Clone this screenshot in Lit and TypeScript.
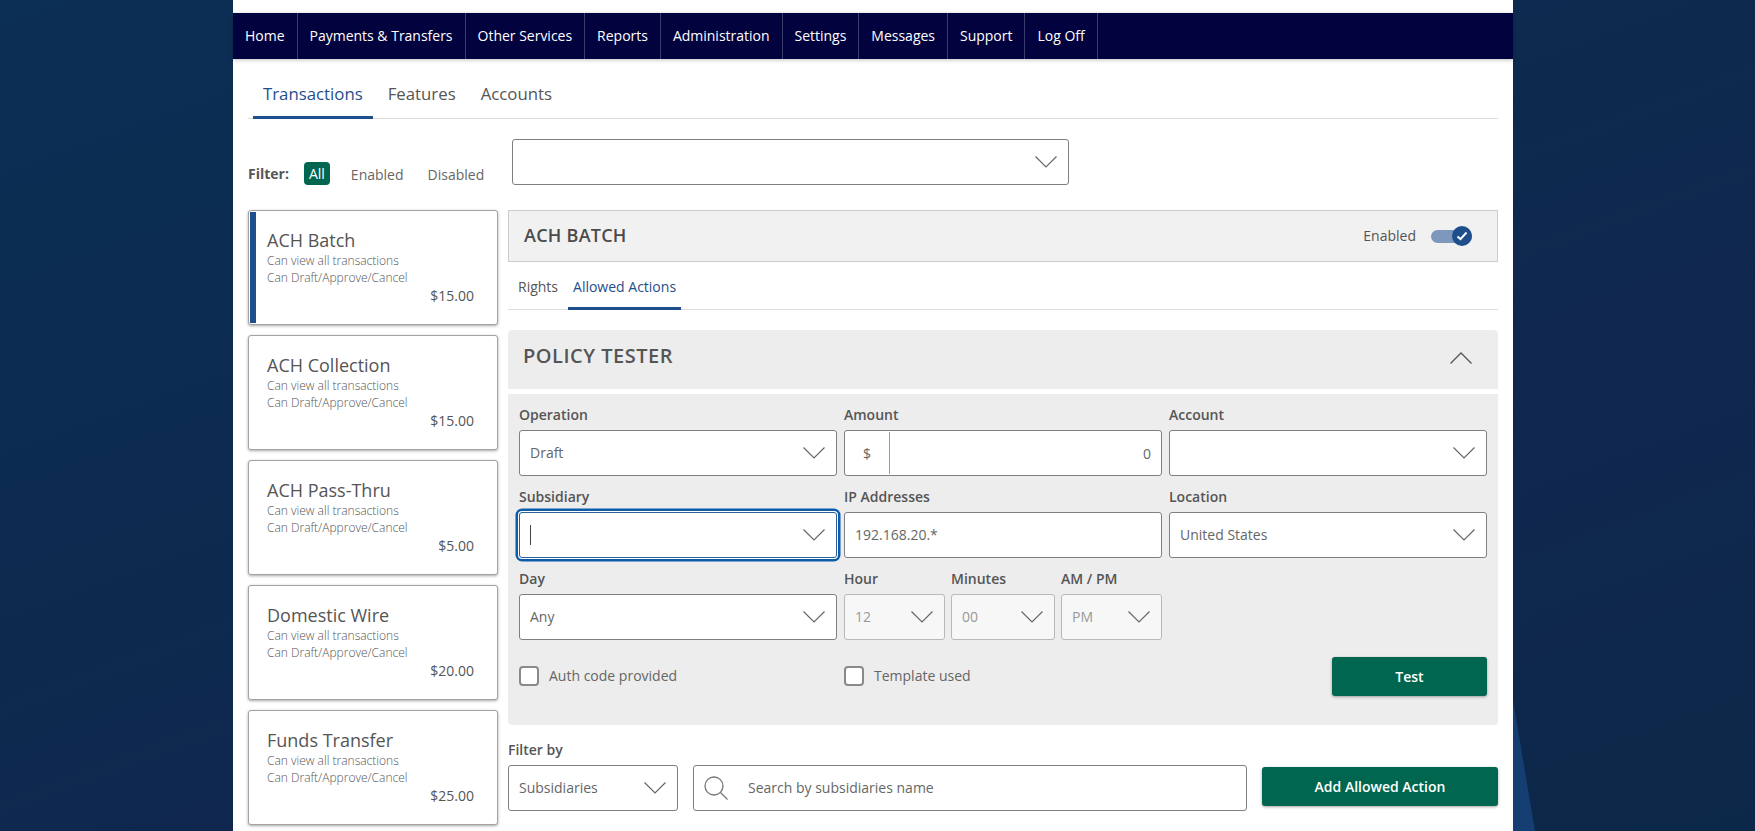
import { LitElement, html, css, svg } from "lit";
import { customElement, state } from "lit/decorators.js";

interface Product {
  name: string;
  price: string;
}

const NAV = [
  "Home",
  "Payments & Transfers",
  "Other Services",
  "Reports",
  "Administration",
  "Settings",
  "Messages",
  "Support",
  "Log Off",
];

const PRODUCTS: Product[] = [
  { name: "ACH Batch", price: "$15.00" },
  { name: "ACH Collection", price: "$15.00" },
  { name: "ACH Pass-Thru", price: "$5.00" },
  { name: "Domestic Wire", price: "$20.00" },
  { name: "Funds Transfer", price: "$25.00" },
];

const chevron = html`<svg class="chev" width="22" height="12" viewBox="0 0 22 12">
  ${svg`<polyline points="0.5,0.5 11,11 21.5,0.5" fill="none" stroke="#666" stroke-width="1.2" />`}
</svg>`;

@customElement("app-root")
export class AppRoot extends LitElement {
  @state() selected = "ACH Batch";

  static styles = css`
    :host {
      display: block;
      height: 831px;
      overflow: hidden;
      position: relative;
      background: linear-gradient(160deg, #0c2f55 0%, #0d2a4e 45%, #10274f 65%, #0c2848 100%);
      font-family: "Open Sans", sans-serif;
      font-size: 14px;
      color: #555;
    }
    .glow {
      position: absolute;
      left: 1513px;
      top: 700px;
      width: 22px;
      height: 131px;
      background: #153e72;
      clip-path: polygon(0 0, 100% 100%, 0 100%);
    }
    .sheet {
      width: 1280px;
      height: 831px;
      margin-left: 233px;
      padding-top: 13px;
      box-sizing: border-box;
      background: #fff;
      position: relative;
    }
    .nav {
      display: flex;
      height: 46px;
      background: #02023f;
      box-shadow: 0 1px 4px rgba(0, 0, 0, 0.25);
    }
    .nav a {
      display: flex;
      align-items: center;
      padding: 0 12px 2px;
      color: #fff;
      font-size: 14px;
      letter-spacing: -0.01px;
      border-right: 1px solid #3b3d6c;
    }
    .content {
      padding: 0 15px;
    }
    .tabs {
      display: flex;
      height: 59px;
      border-bottom: 1px solid #ddd;
      padding-left: 5px;
      gap: 5px;
    }
    .tabs a {
      display: flex;
      align-items: center;
      padding: 11px 10px 0;
      box-sizing: border-box;
      height: 60px;
      font-size: 16.8px;
      color: #555;
      border-bottom: 3px solid transparent;
    }
    .tabs a.active {
      color: #1f4e8c;
      border-bottom-color: #1f4e8c;
    }
    .filter {
      display: flex;
      align-items: flex-end;
      margin-top: 20px;
      height: 46px;
    }
    .filter b {
      font-weight: 700;
      font-size: 14px;
      margin-right: 15px;
      line-height: 24px;
      position: relative;
      top: 1px;
    }
    .pill {
      line-height: 24px;
      padding: 0 5px;
      font-size: 14px;
    }
    .pill.on {
      background: #00664f;
      color: #fff;
      border-radius: 4px;
      height: 23px;
      margin-right: 21px;
    }
    .pill.off {
      margin-right: 24px;
      padding: 0;
      color: #666;
      position: relative;
      top: 2px;
    }
    .filter .field {
      width: 557px;
      margin-left: 4px;
      align-self: stretch;
      background: #fff;
    }
    .main {
      display: flex;
      gap: 10px;
      margin-top: 25px;
    }
    .list {
      width: 250px;
      flex: none;
      display: flex;
      flex-direction: column;
      gap: 10px;
    }
    .card {
      height: 115px;
      box-sizing: border-box;
      border: 1px solid #a3a3a3;
      border-radius: 3px;
      box-shadow: 0 1px 3px rgba(0, 0, 0, 0.35);
      padding: 17px 23px 0 18px;
      position: relative;
      background: #fff;
      display: flex;
      flex-direction: column;
      font-size: 12px;
      line-height: 17px;
      font-weight: 300;
      color: #555;
    }
    .card.on::before {
      content: "";
      position: absolute;
      left: 1px;
      top: 1px;
      bottom: 1px;
      width: 6px;
      background: #1f4e8c;
    }
    .card h3 {
      margin: 0;
      font-size: 18px;
      font-weight: 400;
      line-height: 24px;
      color: #555;
    }
    .card .price {
      align-self: flex-end;
      font-size: 14px;
      font-weight: 400;
      line-height: 19px;
    }
    .detail {
      flex: 1;
      min-width: 0;
    }
    .head {
      height: 52px;
      box-sizing: border-box;
      display: flex;
      align-items: center;
      justify-content: space-between;
      padding: 0 15px 2px;
      background: #f1f1f1;
      border: 1px solid #ccc;
    }
    .head h2 {
      margin: 0;
      font-size: 18px;
      font-weight: 600;
      color: #4a4a4a;
      letter-spacing: 0.25px;
    }
    .toggle-row {
      display: flex;
      align-items: center;
      gap: 15px;
      margin-right: 10px;
    }
    .toggle {
      position: relative;
      width: 41px;
      height: 13px;
      background: #7d97bd;
      border-radius: 7px;
      top: 1px;
    }
    .knob {
      position: absolute;
      right: 0;
      top: -4px;
      width: 20px;
      height: 20px;
      border-radius: 50%;
      background: #1f4e8c;
      display: flex;
      align-items: center;
      justify-content: center;
    }
    .subtabs {
      display: flex;
      height: 47px;
      border-bottom: 1px solid #ddd;
      padding-left: 5px;
    }
    .subtabs a {
      display: flex;
      align-items: center;
      padding: 0 5px;
      box-sizing: border-box;
      height: 48px;
    }
    .subtabs a.active {
      color: #1f4e8c;
      border-bottom: 3px solid #1f4e8c;
      padding-top: 3px;
    }
    .subtabs a + a {
      margin-left: 5px;
    }
    .policy-head {
      margin-top: 20px;
      height: 59px;
      background: #ededed;
      border-radius: 4px 4px 0 0;
      display: flex;
      align-items: center;
      justify-content: space-between;
      padding: 0 26px 0 15px;
    }
    .policy-head h2 {
      margin: 0 0 8px;
      font-size: 20px;
      font-weight: 600;
      color: #555;
      letter-spacing: 0.5px;
    }
    .policy-head svg {
      margin-bottom: 4px;
    }
    .policy {
      margin-top: 5px;
      height: 331px;
      box-sizing: border-box;
      background: #ededed;
      border-radius: 0 0 4px 4px;
      padding: 11px 11px 0;
    }
    .grid {
      display: grid;
      grid-template-columns: repeat(3, 318px);
      column-gap: 7px;
      row-gap: 11px;
    }
    .lbl {
      display: block;
      font-size: 14px;
      font-weight: 600;
      line-height: 19px;
      height: 19px;
      margin-bottom: 6px;
      color: #555;
    }
    .field {
      height: 46px;
      box-sizing: border-box;
      border: 1px solid #7f7f7f;
      border-radius: 3px;
      background: #fff;
      display: flex;
      align-items: center;
      padding: 0 11px 1px 10px;
      justify-content: space-between;
      color: #666;
      font-size: 14px;
    }
    .field.focus {
      border-color: #2a5f99;
      box-shadow: 0 0 0 1px #fff, 0 0 0 3.5px #0b5cab;
    }
    .caret {
      width: 1px;
      height: 20px;
      background: #444;
    }
    .field.disabled {
      background: #f7f7f7;
      border-color: #b9b9b9;
      color: #999;
    }
    .amount {
      padding: 0;
    }
    .amount .cur {
      width: 44px;
      height: 42px;
      border-right: 1px solid #999;
      display: flex;
      align-items: center;
      justify-content: center;
      flex: none;
    }
    .amount .val {
      flex: 1;
      text-align: right;
      padding-right: 10px;
    }
    .time {
      display: grid;
      grid-template-columns: 101px 104px 101px;
      column-gap: 6px;
    }
    .checks {
      display: grid;
      grid-template-columns: 325px 325px 318px;
      align-items: center;
      margin-top: 17px;
    }
    .check {
      display: flex;
      align-items: center;
      gap: 10px;
      color: #666;
      padding-bottom: 2px;
    }
    .box {
      width: 20px;
      height: 20px;
      box-sizing: border-box;
      border: 2px solid #8a8a8a;
      border-radius: 4px;
      background: #fff;
    }
    .btn {
      height: 39px;
      background: #00664f;
      color: #fff;
      font-weight: 600;
      font-size: 14px;
      border-radius: 3px;
      display: flex;
      align-items: center;
      justify-content: center;
      box-shadow: 0 1px 3px rgba(0, 0, 0, 0.35);
    }
    .test {
      width: 155px;
      justify-self: end;
    }
    .filter-by {
      margin-top: 15px;
    }
    .filter-row {
      display: flex;
      align-items: flex-start;
    }
    .filter-row .sel {
      width: 170px;
      flex: none;
    }
    .search {
      width: 554px;
      flex: none;
      margin: 0 15px;
      justify-content: flex-start;
      gap: 20px;
    }
    .add {
      flex: 1;
      margin-top: 2px;
    }
  `;

  renderSelect(value: string, cls = "") {
    return html`<div class="field ${cls}">
      <span>${value}</span>${chevron}
    </div>`;
  }

  render() {
    return html`
      <div class="glow"></div>
      <div class="sheet">
        <div class="nav">${NAV.map((n) => html`<a>${n}</a>`)}</div>
        <div class="content">
          <div class="tabs">
            <a class="active">Transactions</a>
            <a>Features</a>
            <a>Accounts</a>
          </div>
          <div class="filter">
            <b>Filter:</b>
            <span class="pill on">All</span>
            <span class="pill off">Enabled</span>
            <span class="pill off">Disabled</span>
            ${this.renderSelect("")}
          </div>
          <div class="main">
            <div class="list">
              ${PRODUCTS.map(
                (p) => html`<div class="card ${p.name === this.selected ? "on" : ""}">
                  <h3>${p.name}</h3>
                  <span>Can view all transactions</span>
                  <span>Can Draft/Approve/Cancel</span>
                  <span class="price">${p.price}</span>
                </div>`
              )}
            </div>
            <div class="detail">
              <div class="head">
                <h2>ACH BATCH</h2>
                <div class="toggle-row">
                  <span>Enabled</span>
                  <div class="toggle">
                    <div class="knob">
                      <svg width="12" height="10" viewBox="0 0 12 10">
                        <polyline points="1.5,5.5 4.5,8.2 10.5,1.5" fill="none" stroke="#fff" stroke-width="2" />
                      </svg>
                    </div>
                  </div>
                </div>
              </div>
              <div class="subtabs">
                <a>Rights</a>
                <a class="active">Allowed Actions</a>
              </div>
              <div class="policy-head">
                <h2>POLICY TESTER</h2>
                <svg width="22" height="12" viewBox="0 0 22 12">
                  <polyline points="0.5,11.5 11,1 21.5,11.5" fill="none" stroke="#555" stroke-width="1.3" />
                </svg>
              </div>
              <div class="policy">
                <div class="grid">
                  <div><span class="lbl">Operation</span>${this.renderSelect("Draft")}</div>
                  <div>
                    <span class="lbl">Amount</span>
                    <div class="field amount">
                      <span class="cur">$</span><span class="val">0</span>
                    </div>
                  </div>
                  <div><span class="lbl">Account</span>${this.renderSelect("")}</div>
                  <div>
                    <span class="lbl">Subsidiary</span>
                    <div class="field focus"><span class="caret"></span>${chevron}</div>
                  </div>
                  <div>
                    <span class="lbl">IP Addresses</span>
                    <div class="field">192.168.20.*</div>
                  </div>
                  <div><span class="lbl">Location</span>${this.renderSelect("United States")}</div>
                  <div><span class="lbl">Day</span>${this.renderSelect("Any")}</div>
                  <div class="time">
                    <div><span class="lbl">Hour</span>${this.renderSelect("12", "disabled")}</div>
                    <div><span class="lbl">Minutes</span>${this.renderSelect("00", "disabled")}</div>
                    <div><span class="lbl">AM / PM</span>${this.renderSelect("PM", "disabled")}</div>
                  </div>
                </div>
                <div class="checks">
                  <div class="check"><span class="box"></span>Auth code provided</div>
                  <div class="check"><span class="box"></span>Template used</div>
                  <div class="btn test">Test</div>
                </div>
              </div>
              <div class="filter-by">
                <span class="lbl">Filter by</span>
                <div class="filter-row">
                  <div class="sel">${this.renderSelect("Subsidiaries")}</div>
                  <div class="field search">
                    <svg width="24" height="24" viewBox="0 0 24 24">
                      <circle cx="10" cy="10" r="9" fill="none" stroke="#777" stroke-width="1.3" />
                      <line x1="16.5" y1="16.5" x2="23.5" y2="23.5" stroke="#777" stroke-width="1.3" />
                    </svg>
                    <span>Search by subsidiaries name</span>
                  </div>
                  <div class="btn add">Add Allowed Action</div>
                </div>
              </div>
            </div>
          </div>
        </div>
      </div>
    `;
  }
}
